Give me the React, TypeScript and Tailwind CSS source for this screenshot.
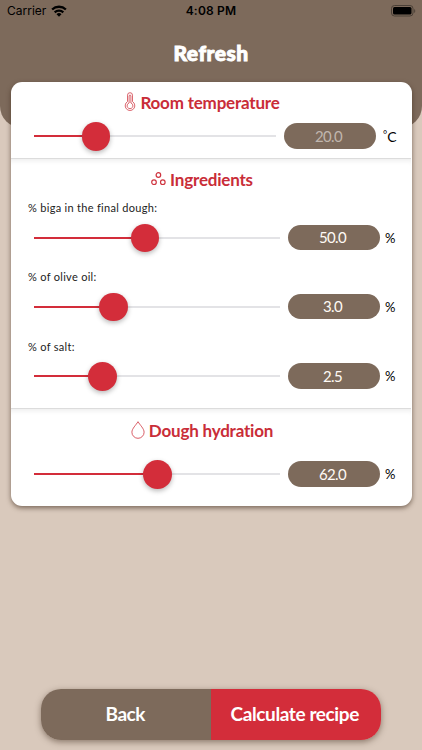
import type { ReactNode } from "react";

type RowProps = { percent: number; value: string; unit?: ReactNode; muted?: boolean };

function Slider({ percent }: { percent: number }) {
  return (
    <div className="relative flex h-7 flex-1 items-center">
      <div className="h-[2px] w-full bg-[#e3e3e6]">
        <div className="h-full bg-[#d32d3a]" style={{ width: `${percent}%` }} />
      </div>
      <div
        className="absolute top-0 -ml-[14px] size-[28.5px] rounded-full bg-[#d32d3a] shadow-[0_2px_5px_rgba(0,0,0,0.28)]"
        style={{ left: `${percent}%` }}
      />
    </div>
  );
}

function Row({ percent, value, unit = "%", muted = false }: RowProps) {
  return (
    <div className={`flex h-7 items-center pl-6 ${muted ? "pr-[15px]" : "pr-4"}`}>
      <Slider percent={percent} />
      <div
        className={`ml-2 flex h-[25.5px] w-[92px] items-center justify-center rounded-full bg-[#7d6a5b] pr-[3px] text-[15px] tracking-[-0.6px] ${muted ? "text-[#c0b6ae]" : "text-[#fffaf5]"}`}
      >
        {value}
      </div>
      <div
        className={`whitespace-nowrap text-black ${muted ? "ml-[7px] w-[13px] text-[15px]" : "ml-[5px] w-[10px] pt-[2px] text-[13px]"}`}
      >
        {unit}
      </div>
    </div>
  );
}

function Heading({ icon, children }: { icon: ReactNode; children: ReactNode }) {
  return (
    <h2 className="flex h-6 items-center justify-center gap-1 whitespace-nowrap pr-[17px] text-[17px] font-bold tracking-[-0.2px] text-[#c92d38]">
      {icon}
      <span>{children}</span>
    </h2>
  );
}

function Thermometer() {
  return (
    <svg width="12" height="19" viewBox="0 0 12 19" className="-mt-[3px]" fill="none" stroke="#cf3540" strokeWidth="0.75">
      <path d="M3.500 9.600V3.200a2.500 2.500 0 0 1 5 0v6.400a4.800 4.800 0 1 1-5 0Z" />
      <path d="M5.100 11V4a.9.9 0 0 1 1.800 0v7a2.900 2.900 0 1 1-1.800 0Z" />
    </svg>
  );
}

function Circles() {
  return (
    <svg width="15" height="14" viewBox="0 0 15 14" className="-mt-[3px]" fill="none" stroke="#cf3540" strokeWidth="1.2">
      <circle cx="7.4" cy="3" r="2.3" />
      <circle cx="3" cy="10.200" r="2.3" />
      <circle cx="11.8" cy="10.200" r="2.3" />
    </svg>
  );
}

function Drop() {
  return (
    <svg width="14" height="18" viewBox="0 0 14 18" className="-mt-[3px]" fill="none" stroke="#cf3540" strokeWidth="0.8">
      <path d="M7 .7C5 4 .9 7.700 .9 11.200a6.100 6.100 0 0 0 12.200 0C13.100 7.700 9 4 7 .7Z" />
    </svg>
  );
}

function StatusBar() {
  return (
    <div className="relative flex h-[22px] items-center justify-between pl-[7px] pr-[6px] font-['Inter',sans-serif] text-[12px] text-black">
      <div className="flex items-center gap-[5px]">
        <span>Carrier</span>
        <svg width="16" height="12" viewBox="0 0 16 12" fill="none" stroke="black" strokeWidth="2.3">
          <path d="M1.100 4.500a10 10 0 0 1 13.800 0" />
          <path d="M3.700 7.400a6.200 6.200 0 0 1 8.600 0" />
          <path d="M8 11.800 5.500 9.200a3.500 3.500 0 0 1 5 0Z" fill="black" stroke="none" />
        </svg>
      </div>
      <span className="absolute left-1/2 -translate-x-1/2 whitespace-nowrap font-semibold tracking-[0.2px]">4:08 PM</span>
      <svg width="25" height="12" viewBox="0 0 25 12">
        <rect x=".5" y=".5" width="21.500" height="10.500" rx="3" fill="none" stroke="#4b4037" />
        <rect x="2" y="2" width="18.500" height="7.500" rx="1.500" />
        <path d="M23.200 4v4c1.400-.6 1.400-3.400 0-4Z" fill="#4b4037" />
      </svg>
    </div>
  );
}

function Celsius() {
  return (
    <span className="flex h-5 items-center">
      <span className="-mt-[4px] w-[5px] text-[10px] leading-none">°</span>
      <span className="pt-[1px] text-[14px]">C</span>
    </span>
  );
}

export default function App() {
  const label = "h-4 pl-[18px] text-[11px] leading-4 text-[#222] tracking-[0.3px]";
  const divider = "border-t border-[#dcdcdc] shadow-[inset_0_5px_5px_-3px_rgba(0,0,0,0.07)]";
  return (
    <div className="flex h-[750px] w-[422px] flex-col overflow-hidden bg-[#d9c9bc] font-['Lato',sans-serif]">
      <header className="h-[128px] shrink-0 rounded-b-[22px] bg-[#7d6a5b]">
        <StatusBar />
        <h1 className="mt-[16px] text-center text-[21px] font-black leading-[30px] tracking-[0.5px] text-white [-webkit-text-stroke:0.9px_white]">Refresh</h1>
      </header>
      <main className="mx-[10.5px] -mt-[46px] h-[424px] shrink-0 overflow-hidden rounded-[11px] bg-white shadow-[0_2px_5px_rgba(60,40,25,0.6)]">
        <div className="-ml-[0.5px] mr-[0.5px]">
          <section className="h-[76px] pt-[9px]">
            <Heading icon={<Thermometer />}>Room temperature</Heading>
            <div className="mt-[7px]">
              <Row percent={25.5} value="20.0" unit={<Celsius />} muted />
            </div>
          </section>
          <section className={`h-[250px] pt-[9px] ${divider}`}>
            <Heading icon={<Circles />}>Ingredients</Heading>
            <p className={`mt-[8px] ${label}`}>% biga in the final dough:</p>
            <div className="mt-[7.5px]"><Row percent={45} value="50.0" /></div>
            <p className={`mt-[17.5px] ${label}`}>% of olive oil:</p>
            <div className="mt-[7.5px]"><Row percent={32.3} value="3.0" /></div>
            <p className={`mt-[18.5px] ${label}`}>% of salt:</p>
            <div className="mt-[7px]"><Row percent={27.8} value="2.5" /></div>
          </section>
          <section className={`h-[98px] pt-[10px] ${divider}`}>
            <Heading icon={<Drop />}>Dough hydration</Heading>
            <div className="mt-[17px]"><Row percent={50} value="62.0" /></div>
          </section>
        </div>
      </main>
      <footer className="mx-[41px] mb-[10px] mt-auto flex h-[51px] shrink-0 overflow-hidden rounded-[20px] text-[19px] font-bold text-white shadow-[0_2px_6px_rgba(60,40,25,0.5)]">
        <button className="flex-1 bg-[#7d6a5b] pr-[1px] tracking-[-0.5px]">Back</button>
        <button className="flex-1 whitespace-nowrap bg-[#d32d3a] pr-[2px] tracking-[-0.4px]">Calculate recipe</button>
      </footer>
    </div>
  );
}
